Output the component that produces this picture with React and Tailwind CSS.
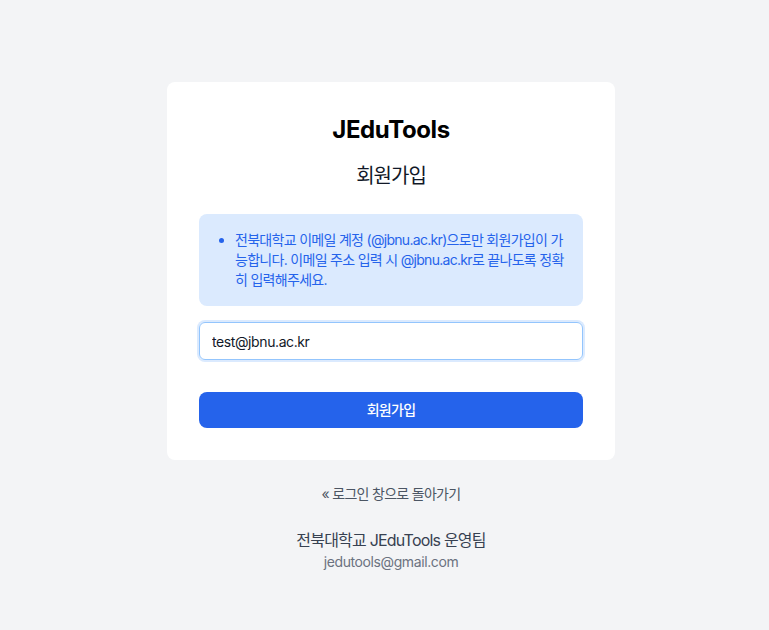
import React, { useState } from "react";

const App = () => {
  const [email, setEmail] = useState("test@jbnu.ac.kr");

  return (
    <div
      className="min-h-screen w-full bg-[#f3f4f6] flex flex-col items-center pt-[82px] pl-[13px] tracking-tight"
      style={{ fontFamily: 'Inter, "Noto Sans CJK KR", sans-serif' }}
    >
      {/* card */}
      <div className="w-[448px] bg-white rounded-lg p-8">
        <h1 className="text-2xl font-bold text-center text-black">JEduTools</h1>
        <h2 className="mt-4 text-xl text-center text-[#111827] tracking-tighter">회원가입</h2>

        <div className="mt-6 bg-[#dbeafe] rounded-lg p-4">
          <ul className="list-disc pl-5 text-sm text-[#2563eb] tracking-tighter">
            <li>
              전북대학교 이메일 계정 (@jbnu.ac.kr)으로만 회원가입이 가능합니다. 이메일 주소 입력 시 @jbnu.ac.kr로
              끝나도록 정확히 입력해주세요.
            </li>
          </ul>
        </div>

        <form className="mt-4" onSubmit={(e) => e.preventDefault()}>
          <input
            type="email"
            value={email}
            onChange={(e) => setEmail(e.target.value)}
            className="w-full h-[38px] px-3 text-sm text-[#111827] border border-[#93c5fd] rounded-md ring-2 ring-[#dbeafe] outline-none"
          />
          <button
            type="submit"
            className="mt-8 w-full h-9 bg-[#2563eb] text-white text-sm font-medium rounded-lg tracking-tighter"
          >
            회원가입
          </button>
        </form>
      </div>

      <a href="#" className="mt-6 text-sm text-[#4b5563] tracking-tighter">
        « 로그인 창으로 돌아가기
      </a>

      <div className="mt-6 text-center">
        <p className="text-base text-[#374151] tracking-tighter">전북대학교 JEduTools 운영팀</p>
        <p className="text-sm text-[#6b7280]">jedutools@gmail.com</p>
      </div>
    </div>
  );
};

export default App;
